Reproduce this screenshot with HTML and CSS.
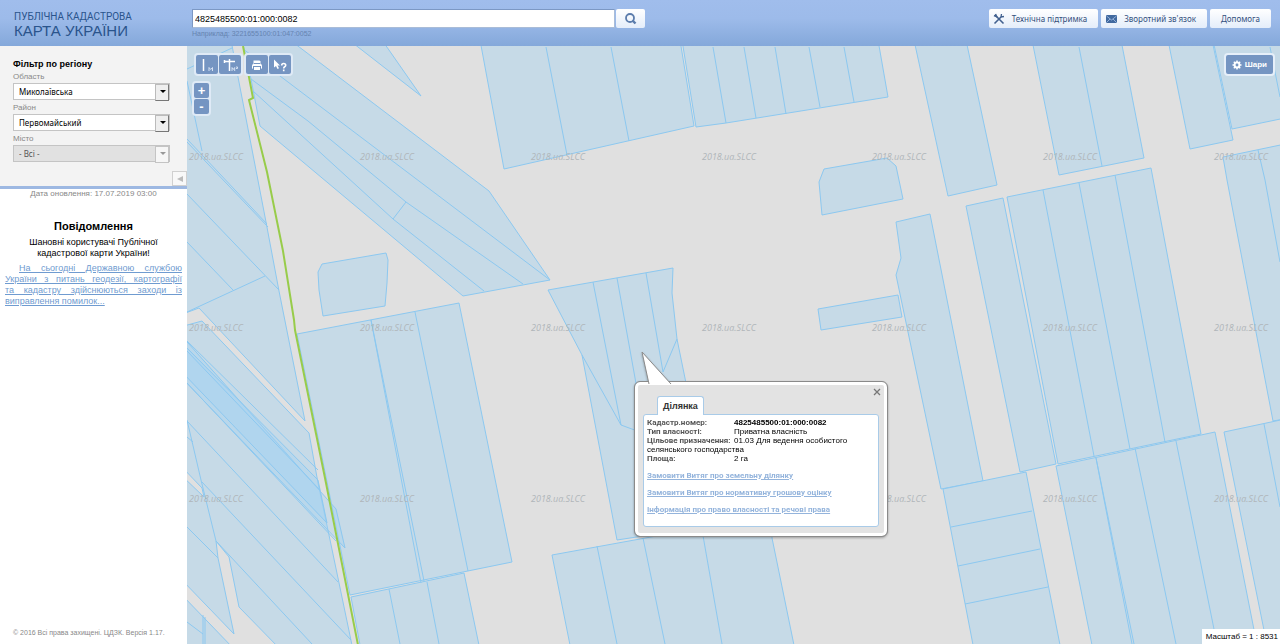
FILE: index.html
```html
<!DOCTYPE html>
<html lang="uk">
<head>
    <meta charset="UTF-8">
    <meta name="viewport" content="width=device-width, initial-scale=1.0">
    <title>Публічна кадастрова карта України</title>
    <link rel="stylesheet" href="styles.css">
</head>
<body>
    <header class="header">
        <a class="logo" href="#">
            <span class="logo-top">ПУБЛІЧНА КАДАСТРОВА</span>
            <span class="logo-main">КАРТА УКРАЇНИ</span>
        </a>
        <form class="search">
            <div class="search-row">
                <input class="search-input" id="search" type="text" value="4825485500:01:000:0082" aria-label="Кадастровий номер">
                <button class="search-btn" type="button" aria-label="Пошук">
                    <svg width="14" height="14" viewBox="0 0 14 14"><circle cx="6" cy="6" r="4" fill="none" stroke="#5b7cac" stroke-width="1.800"/><path d="M8.500 8.500l3 3" stroke="#5b7cac" stroke-width="2.400"/></svg>
                </button>
            </div>
            <label class="search-hint" for="search">Наприклад: 3221655100:01:047:0052</label>
        </form>
        <nav class="nav">
            <button class="nav-btn" type="button">
                <svg width="12" height="12" viewBox="0 0 12 12" fill="none" stroke="#41608f"><path d="M3.500 3.500L10.500 10.500" stroke-width="1.600"/><path d="M8 4L1.500 10.500" stroke-width="1.600"/><path d="M1 2.500L3.800 3.800L2.500 1" stroke-width="1.500"/><path d="M8.500 1L8 4l3-.5" stroke-width="1.300"/></svg>
                Технічна підтримка
            </button>
            <button class="nav-btn" type="button">
                <svg width="12" height="12" viewBox="0 0 12 12"><rect x="1" y="2" width="11" height="8" rx="1" fill="#41699f"/><path d="M1.500 3l5 4 5-4M1.500 9.500l3.500-3.500M11.500 9.500L8 6" fill="none" stroke="#a9c4e8" stroke-width=".8"/></svg>
                Зворотний зв'язок
            </button>
            <button class="nav-btn" type="button">Допомога</button>
        </nav>
    </header>

    <div class="content">
        <aside class="sidebar">
            <form class="filter">
                <h2 class="filter-title">Фільтр по регіону</h2>
                <label class="filter-label" for="region">Область</label>
                <div class="select-box">
                    <select id="region"><option>Миколаївська</option></select>
                </div>
                <label class="filter-label" for="district">Район</label>
                <div class="select-box">
                    <select id="district"><option>Первомайський</option></select>
                </div>
                <label class="filter-label" for="city">Місто</label>
                <div class="select-box select-disabled">
                    <select id="city" disabled><option>- Всі -</option></select>
                </div>
                <button class="collapse" type="button" aria-label="Згорнути">
                    <svg width="6" height="6" viewBox="0 0 6 6"><path d="M6 0v6L0 3z" fill="#bbb"/></svg>
                </button>
            </form>
            <div class="updated">Дата оновлення: 17.07.2019 03:00</div>
            <section class="news">
                <h3>Повідомлення</h3>
                <p class="news-lead">Шановні користувачі Публічної кадастрової карти України!</p>
                <a class="news-link" href="#">На сьогодні Державною службою України з питань геодезії, картографії та&nbsp;кадастру здійснюються заходи із виправлення помилок...</a>
            </section>
            <footer class="copyright">© 2016 Всі права захищені. ЦДЗК. Версія 1.17.</footer>
        </aside>

        <main class="map">
            <svg class="map-canvas" viewBox="187 46 1093 598" preserveAspectRatio="xMinYMin slice">
                <!-- ділянки -->
                <g class="parcels">
                    <path d="M180 40H231L238 77L266 222L279 291L305 421L199 308L180 315z"/>
                    <path d="M180 327L202 321L309 433L318 483L329 535L353 650H281L239 607L229 557L216 541L218 558L234 634L180 578V474L204 497L202 488L180 465z"/>
                    <path d="M180 593L235 650H180z"/>
                    <path d="M242 40L251 79L260 126L463 296L550 280L489 191L290 40z"/>
                    <path d="M349 40L421 96L382 40z"/>
                    <path d="M322 264L386 253L388 260L387 283L385 306L323 316L319 290L318 272z"/>
                    <path d="M297 334L459 303L512 562L350 595z"/>
                    <path d="M351 597L464 573L480 650H361z"/>
                    <path d="M480 40L504 169L694 126L680 40z"/>
                    <path d="M682 40L696 127L726 123L888 97L878 40z"/>
                    <path d="M914 40L948 196L997 185L966 40z"/>
                    <path d="M824 169L887 158L896 166L903 199L822 215L819 182z"/>
                    <path d="M1032 40L1059 175L1144 158L1121 40z"/>
                    <path d="M1168 40L1190 149L1233 140L1212 40z"/>
                    <path d="M1213 40L1232 129L1290 117V40z"/>
                    <path d="M1223 157L1290 143V418L1273 421L1227 180z"/>
                    <path d="M896 222L930 214L983 481L941 489L896 275L901 258z"/>
                    <path d="M818 309L898 295L902 317L821 330z"/>
                    <path d="M966 206L1003 198L1056 464L1020 472z"/>
                    <path d="M1007 197L1151 168L1201 434L1058 464z"/>
                    <path d="M1056 466L1215 432L1258 650H1093z"/>
                    <path d="M1224 432L1290 418V650H1268z"/>
                    <path d="M943 489L1026 472L1061 650H974z"/>
                    <path d="M548 290L673 268L672 293L677 339L715 525L617 540L582 355z"/>
                    <path d="M552 555L772 515V538L795 650H571z"/>
                    <path class="overlap" d="M180 334L336 509L345 548L180 376z"/>
                    <path class="overlap" d="M180 341L318 480L327 523L180 370z"/>
                </g>
                <!-- межі всередині масивів -->
                <g class="borders">
                    <path d="M187 69L232 48M187 81L202 151M187 139L267 224M187 142L268 227M187 194L279 290M187 242L233 290M187 312L265 276"/>
                    <path d="M187 341L318 470M187 351L320 490M187 383L336 541M187 421L338 582M202 482L351 640M187 420L201 480L216 541L312 644M187 527L218 558M187 437L193 442M203 615V644M205 617V644M187 622L203 634"/>
                    <path d="M243 49L280 76L550 280M251 79L308 121L406 202L523 284M253 91L393 219L484 291M406 202L393 219"/>
                    <path d="M371 320L421 583M371 320L424 581M415 312L468 571M389 589L400 644M427 582L439 644"/>
                    <path d="M546 47L567 155M611 47L629 141M713 47L726 123M744 47L756 118M775 47L786 114M809 47L820 107M844 47L854 102"/>
                    <path d="M1079 47L1102 166M1270 47L1280 97M1258 150L1265 180L1280 262"/>
                    <path d="M1043 190L1094 456M1079 183L1130 449M1115 175L1165 442"/>
                    <path d="M1096 458L1132 644M1096 458L1134 644M1135 448L1176 644M1176 441L1217 644M1264 424L1280 507"/>
                    <path d="M951 527L1032 511M958 566L1040 549M965 604L1048 587"/>
                    <path d="M582 355L621 425L640 432M593 282L621 425M617 278L648 450M646 273L663 372L677 339"/>
                    <path d="M597 546L617 644M643 538L665 644M702 530L722 644"/>
                </g>
                <path class="district-line" d="M243 46L253 98L249 100L267 172L283 251L294 320L295 330L325 478L359 650"/>
                <g class="watermark">
                    <text x="189" y="160">2018.ua.SLCC</text>
                    <text x="360" y="160">2018.ua.SLCC</text>
                    <text x="531" y="160">2018.ua.SLCC</text>
                    <text x="702" y="160">2018.ua.SLCC</text>
                    <text x="872" y="160">2018.ua.SLCC</text>
                    <text x="1043" y="160">2018.ua.SLCC</text>
                    <text x="1214" y="160">2018.ua.SLCC</text>
                    <text x="189" y="331">2018.ua.SLCC</text>
                    <text x="360" y="331">2018.ua.SLCC</text>
                    <text x="531" y="331">2018.ua.SLCC</text>
                    <text x="702" y="331">2018.ua.SLCC</text>
                    <text x="872" y="331">2018.ua.SLCC</text>
                    <text x="1043" y="331">2018.ua.SLCC</text>
                    <text x="1214" y="331">2018.ua.SLCC</text>
                    <text x="189" y="502">2018.ua.SLCC</text>
                    <text x="360" y="502">2018.ua.SLCC</text>
                    <text x="531" y="502">2018.ua.SLCC</text>
                    <text x="872" y="502">2018.ua.SLCC</text>
                    <text x="1043" y="502">2018.ua.SLCC</text>
                    <text x="1214" y="502">2018.ua.SLCC</text>
                </g>
            </svg>

            <div class="toolbar">
                <div class="tool-group">
                    <button type="button" aria-label="Виміряти відстань">
                        <svg width="22" height="18" viewBox="0 0 22 18"><path d="M7.500 3v12" stroke="#fff" stroke-width="1.500"/><path d="M13 15v-3.500l1.700 2L16.500 11.500V15" fill="none" stroke="#d5e1f2"/></svg>
                    </button>
                    <button type="button" aria-label="Виміряти площу">
                        <svg width="22" height="18" viewBox="0 0 22 18"><path d="M5 5.500h11M10.500 3v12M5.500 4v3" fill="none" stroke="#fff" stroke-width="1.500"/><path d="M13 15v-3.500l1.300 2 1.400-2V15M17 11h1.500v1.500H17" fill="none" stroke="#d5e1f2"/></svg>
                    </button>
                </div>
                <div class="tool-group">
                    <button type="button" aria-label="Друк">
                        <svg width="22" height="18" viewBox="0 0 22 18"><path d="M7.500 4.500h6l1 1V8h-7z" fill="#fff"/><rect x="6" y="8" width="10" height="5" rx="1.500" fill="#fff"/><rect x="7.500" y="10.500" width="7" height="4" fill="#fff" stroke="#7595c2"/><path d="M8 7.500h6" stroke="#7595c2"/></svg>
                    </button>
                    <button type="button" aria-label="Інформація">
                        <svg width="22" height="18" viewBox="0 0 22 18"><path d="M5 3.500v8l2-1.500 1.500 3 1.500-.7L8.500 9.500H11z" fill="#fff"/><path d="M12.700 9.500q0-2 2-2t2 1.800q0 1-1 1.500t-1 1.700M14.700 13.500v1.800" fill="none" stroke="#fff" stroke-width="1.600"/></svg>
                    </button>
                </div>
            </div>

            <div class="zoom">
                <button type="button">+</button>
                <button type="button">-</button>
            </div>

            <button class="layers" type="button">
                <svg width="10" height="10" viewBox="0 0 10 10"><circle cx="5" cy="5" r="2.400" fill="none" stroke="#fff" stroke-width="2"/><path d="M5 .5v9M.5 5h9M1.800 1.800l1.500 1.500M6.700 6.700l1.500 1.500M8.200 1.800L6.700 3.300M3.300 6.700L1.800 8.200" stroke="#fff" stroke-width="1.500"/><circle cx="5" cy="5" r="1.400" fill="#7595c2"/></svg>
                Шари
            </button>

            <div class="popup">
                <svg class="popup-tail" width="32" height="35" viewBox="0 0 32 35"><path d="M8 34L1 2L30 34" fill="#fff" stroke="#8a8a8a"/></svg>
                <div class="popup-body">
                    <div class="popup-head">
                        <div class="tab">Ділянка</div>
                        <button class="popup-close" type="button" aria-label="Закрити">
                            <svg width="8" height="8" viewBox="0 0 8 8"><path d="M1 1l6 6M7 1L1 7" stroke="#777" stroke-width="1.300"/></svg>
                        </button>
                    </div>
                    <div class="popup-panel">
                        <div class="row"><b class="key">Кадастр.номер:</b><b>4825485500:01:000:0082</b></div>
                        <div class="row"><b class="key">Тип власності:</b>Приватна власність</div>
                        <div class="row"><b class="key">Цільове призначення:</b>01.03 Для ведення особистого селянського господарства</div>
                        <div class="row"><b class="key">Площа:</b>2 га</div>
                        <div class="popup-links">
                            <a href="#">Замовити Витяг про земельну ділянку</a>
                            <a href="#">Замовити Витяг про нормативну грошову оцінку</a>
                            <a href="#">Інформація про право власності та речові права</a>
                        </div>
                    </div>
                </div>
            </div>

            <div class="scale">Масштаб = 1 : 8531</div>
        </main>
    </div>
</body>
</html>
```
FILE: styles.css
```css
* { box-sizing: border-box; }
body {
    margin: 0;
    height: 100vh;
    display: flex;
    flex-direction: column;
    font-family: "Liberation Sans", Arial, sans-serif;
    font-size: 9px;
    color: #000;
    background: #fff;
}
button, input, select {
    font: inherit;
    margin: 0;
    padding: 0;
    border: 0;
}
button { cursor: pointer; }
svg { display: block; }

/* шапка */
.header {
    flex: none;
    display: flex;
    align-items: flex-start;
    height: 46px;
    padding: 9px 9px 0 14px;
    background: linear-gradient(#a0bdec, #9dbbea 40%, #84a8da);
}
.logo {
    width: 178px;
    padding-top: 2px;
    color: #2a548c;
    text-decoration: none;
}
.logo span { display: block; }
.logo-top {
    font-family: Roboto, Arial, sans-serif;
    font-size: 10px;
    line-height: 12px;
}
.logo-main {
    font-size: 15px;
    line-height: 15px;
}
.search { width: 453px; }
.search-row {
    display: flex;
    gap: 1px;
}
.search-input {
    flex: 1;
    height: 19px;
    padding: 0 2px;
    background: #fff;
    border: 1px solid #7c98c4;
    border-right-color: #a9bcd8;
    border-bottom-color: #a9bcd8;
}
.search-btn {
    width: 29px;
    height: 19px;
    display: flex;
    align-items: center;
    justify-content: center;
    border-radius: 2px;
    background: linear-gradient(#fff, #e4edfa);
}
.search-hint {
    display: block;
    margin-top: 1px;
    font-size: 7px;
    line-height: 10px;
    color: #6583b0;
}
.nav {
    display: flex;
    gap: 3px;
    margin-left: auto;
}
.nav-btn {
    height: 19px;
    padding: 0 11px;
    display: flex;
    align-items: center;
    gap: 7px;
    color: #33507c;
    font-family: "Noto Sans", Tahoma, sans-serif;
    font-size: 8px;
    border-radius: 2px;
    background: linear-gradient(#fff, #e4edfa);
}
.nav-btn svg { margin-left: -7px; }

.content {
    flex: 1;
    display: flex;
    min-height: 0;
}

/* бокова панель */
.sidebar {
    flex: none;
    width: 187px;
    display: flex;
    flex-direction: column;
}
.filter {
    display: flex;
    flex-direction: column;
    padding: 12px 0 0 13px;
    background: #f3f3f3;
    border-bottom: 3px solid #9db8e2;
}
.filter-title {
    margin: 0;
    font: bold 9px/13px "Liberation Sans", Arial, sans-serif;
}
.filter-label {
    color: #888;
    font-size: 8px;
    line-height: 12px;
}
.select-box {
    position: relative;
    width: 157px;
    margin-bottom: 2px;
}
.select-box select {
    display: block;
    appearance: none;
    width: 100%;
    height: 17px;
    padding: 0 5px;
    color: #000;
    font-family: "Noto Sans", Tahoma, sans-serif;
    font-size: 8px;
    background: #fff;
    border: 1px solid #c4c4c4;
    border-radius: 0;
    opacity: 1;
}
.select-box::before {
    content: "";
    position: absolute;
    top: 1px;
    right: 1px;
    width: 12px;
    height: 15px;
    background: #eee;
    border: 1px solid #777;
    border-top-color: #bbb;
    border-left-color: #bbb;
    pointer-events: none;
}
.select-box::after {
    content: "";
    position: absolute;
    top: 7px;
    right: 4px;
    border: 3px solid transparent;
    border-top-color: #000;
    border-bottom: 0;
    pointer-events: none;
}
.select-disabled select {
    color: #555;
    background: #e1e1e1;
}
.select-disabled::before {
    background: #f6f6f6;
    border-color: #c4c4c4;
}
.select-disabled::after { border-top-color: #999; }
.collapse {
    align-self: flex-end;
    width: 15px;
    height: 15px;
    margin-top: 7px;
    display: flex;
    align-items: center;
    justify-content: center;
    background: #f8f8f8;
    border: 1px solid #d0d0d0;
}
.updated {
    font-size: 8px;
    line-height: 9px;
    text-align: center;
    color: #888;
}
.news {
    flex: 1;
    padding: 20px 5px 0;
    line-height: 11px;
}
.news h3 {
    margin: 0 0 3px;
    font-size: 11px;
    line-height: 16px;
    text-align: center;
}
.news-lead {
    margin: 0 14px 4px;
    text-align: center;
}
.news-link {
    display: block;
    text-align: justify;
    text-indent: 14px;
    color: #6f9bd0;
}
.copyright {
    padding: 0 13px 5px;
    font-size: 7px;
    line-height: 12px;
    color: #888;
    white-space: nowrap;
}

/* карта */
.map {
    flex: 1;
    position: relative;
    overflow: hidden;
    background: #e0e0e0;
}
.map-canvas {
    width: 100%;
    height: 100%;
}
.parcels path {
    fill: #c6dae7;
    stroke: #8cc8f0;
}
.parcels .overlap {
    fill: #a0d2f3;
    fill-opacity: .35;
}
.borders path {
    fill: none;
    stroke: #8cc8f0;
}
.district-line {
    fill: none;
    stroke: #98cc4a;
    stroke-width: 2;
}
.watermark {
    font: italic 9px "Open Sans", sans-serif;
    fill: #b0b6ba;
}

.toolbar {
    position: absolute;
    top: 7px;
    left: 7px;
    display: flex;
    gap: 1px;
}
.tool-group {
    display: flex;
    gap: 1px;
    padding: 2px;
    border-radius: 4px;
    background: #dfeaf6;
}
.tool-group button {
    width: 22px;
    height: 19px;
    border-radius: 2px;
    background: #7595c2;
}
.zoom {
    position: absolute;
    top: 35px;
    left: 5px;
    display: flex;
    flex-direction: column;
    gap: 1px;
    padding: 2px;
    border-radius: 4px;
    background: #dfeaf6;
}
.zoom button {
    width: 15px;
    height: 15px;
    color: #fff;
    font-size: 13px;
    font-weight: bold;
    line-height: 15px;
    border-radius: 2px;
    background: #7595c2;
}
.layers {
    position: absolute;
    top: 7px;
    right: 5px;
    height: 23px;
    padding: 0 6px;
    display: flex;
    align-items: center;
    gap: 3px;
    color: #fff;
    font-size: 8px;
    font-weight: bold;
    border: 2px solid #e6eff9;
    border-radius: 4px;
    background: #7595c2;
}

/* спливаюче вікно ділянки */
.popup {
    position: absolute;
    top: 336px;
    left: 448px;
    width: 252px;
    filter: drop-shadow(0 1px 1px rgba(0, 0, 0, .3));
}
.popup-tail {
    position: absolute;
    top: -32px;
    left: 6px;
    z-index: 1;
}
.popup-body {
    padding: 5px 5px 6px;
    border: 3px solid #fff;
    outline: 1px solid #8a8a8a;
    border-radius: 5px;
    background: #e3e3e3;
}
.popup-head {
    display: flex;
    justify-content: space-between;
    align-items: flex-start;
    padding-left: 14px;
}
.tab {
    position: relative;
    z-index: 1;
    margin: 6px 0 -1px;
    padding: 0 5px;
    color: #333;
    font-size: 9px;
    font-weight: bold;
    line-height: 18px;
    background: #fff;
    border: 1px solid #a9cbe8;
    border-bottom: 0;
    border-radius: 3px 3px 0 0;
}
.popup-close {
    margin: -2px -2px 0 0;
    background: none;
}
.popup-panel {
    min-height: 113px;
    padding: 3px;
    font-size: 8px;
    line-height: 9px;
    background: #fff;
    border: 1px solid #a9cbe8;
    border-radius: 3px;
}
.key {
    display: inline-block;
    min-width: 87px;
    color: #555;
    font-family: Roboto, Arial, sans-serif;
}
.popup-links {
    display: flex;
    flex-direction: column;
    align-items: flex-start;
    gap: 8px;
    margin-top: 8px;
    font-family: Roboto, Arial, sans-serif;
    font-weight: bold;
}
.popup-links a { color: #94b4dc; }
.scale {
    position: absolute;
    right: 0;
    bottom: 0;
    padding: 0 2px 0 4px;
    font-size: 8px;
    line-height: 15px;
    background: #fff;
}
```
